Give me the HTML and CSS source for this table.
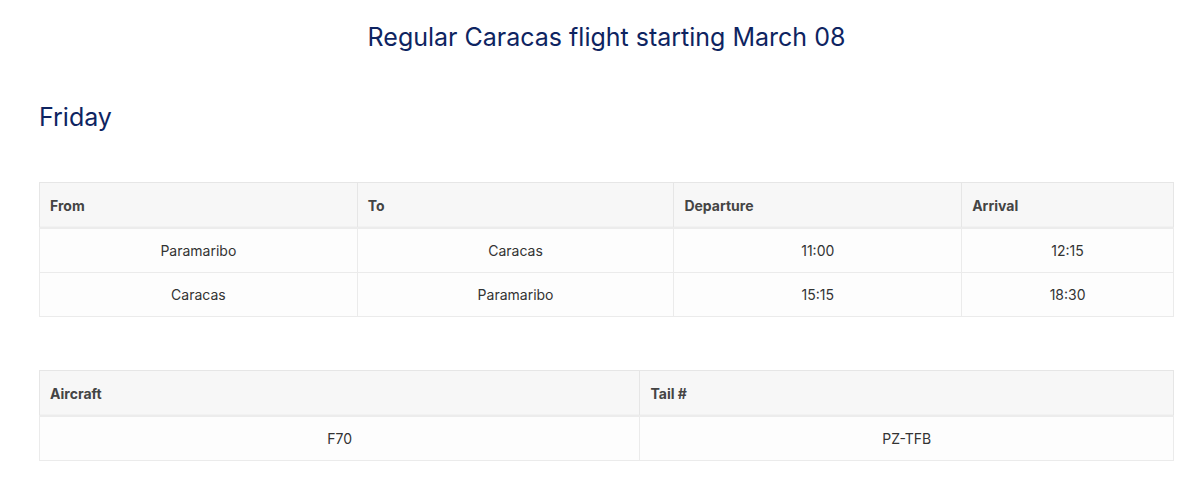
FILE: index.html
```html
<!DOCTYPE html>
<html lang="en">
<head>
<meta charset="utf-8">
<title>Regular Caracas flight</title>
<link rel="stylesheet" href="styles.css">
</head>
<body>
<main class="page">
  <h2 class="title">Regular Caracas flight starting March 08</h2>
  <h3 class="day">Friday</h3>
  <table class="schedule">
    <colgroup>
      <col class="c-from"><col class="c-to"><col class="c-dep"><col class="c-arr">
    </colgroup>
    <thead>
      <tr><th>From</th><th>To</th><th>Departure</th><th>Arrival</th></tr>
    </thead>
    <tbody>
      <tr><td>Paramaribo</td><td>Caracas</td><td>11:00</td><td>12:15</td></tr>
      <tr><td>Caracas</td><td>Paramaribo</td><td>15:15</td><td>18:30</td></tr>
    </tbody>
  </table>
  <table class="schedule aircraft">
    <colgroup>
      <col class="c-air"><col class="c-tail">
    </colgroup>
    <thead>
      <tr><th>Aircraft</th><th>Tail #</th></tr>
    </thead>
    <tbody>
      <tr><td>F70</td><td>PZ-TFB</td></tr>
    </tbody>
  </table>
</main>
</body>
</html>
```
FILE: styles.css
```css
html, body {
  margin: 0;
  padding: 0;
  background: #ffffff;
}
body {
  font-family: "Inter", "Noto Sans", sans-serif;
  color: #333333;
}
.page {
  margin: 0 26px 0 39px;
  padding-top: 20px;
}
.title {
  margin: 0;
  text-align: center;
  font-weight: 400;
  font-size: 25px;
  line-height: 34px;
  color: #0e2461;
}
.day {
  margin: 46px 0 0 0;
  font-weight: 400;
  font-size: 25px;
  line-height: 34px;
  color: #0e2461;
}
.schedule {
  width: 100%;
  border-collapse: collapse;
  margin-top: 48px;
  font-size: 14px;
}
.schedule.aircraft {
  margin-top: 53px;
}
.c-from { width: 318px; }
.c-to { width: 317px; }
.c-dep { width: 288px; }
.c-arr { width: 212px; }
.c-air { width: 601px; }
.c-tail { width: 534px; }
.schedule th {
  background: #f7f7f7;
  border: 1px solid #e6e6e6;
  border-bottom: 2px solid #ececec;
  box-shadow: inset 0 -1px 0 #f2f2f2;
  text-align: left;
  font-weight: 700;
  color: #444444;
  padding: 0 10px;
  height: 44px;
}
.schedule td {
  background: #fdfdfd;
  border: 1px solid #ebebeb;
  text-align: center;
  color: #333333;
  height: 43px;
  padding: 0 10px;
}
```
